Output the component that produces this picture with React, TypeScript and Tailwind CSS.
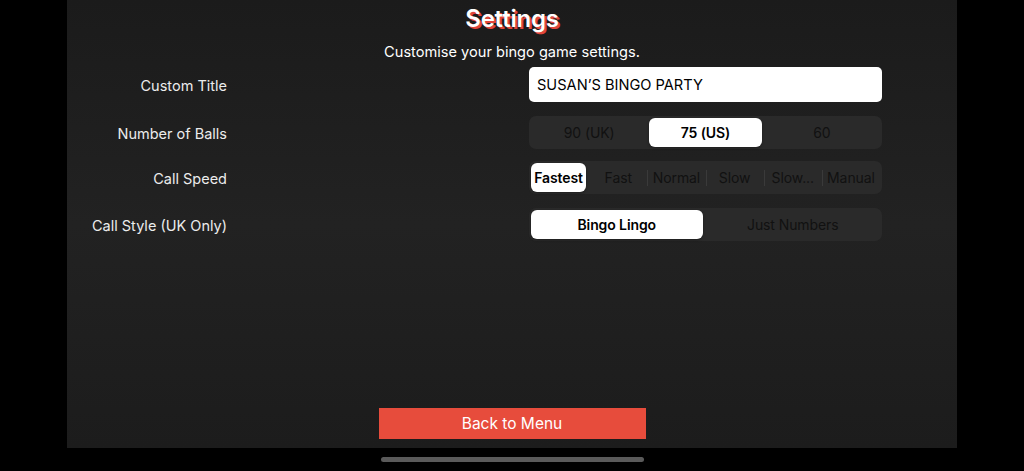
import { useState } from 'react';

const FONT = 'font-["Inter","Liberation_Sans",sans-serif]';

interface SegmentedProps {
  options: string[];
  value: number;
  onChange: (i: number) => void;
}

// iOS-style segmented control with thin dividers between unselected neighbours
function Segmented({ options, value, onChange }: SegmentedProps) {
  return (
    <div className="flex h-[33px] w-[353px] items-stretch rounded-[7px] bg-[#2a2a2a] p-[2px]">
      {options.map((opt, i) => {
        const selected = i === value;
        const first = i === 0;
        const last = i === options.length - 1;
        const showDivider = i > 0 && i !== value && i - 1 !== value;
        return (
          <div key={opt} className="relative flex flex-1 items-stretch">
            {showDivider && (
              <span className="absolute left-0 top-[7px] h-[16px] w-px bg-[#3a3a3a]" />
            )}
            <button
              type="button"
              onClick={() => onChange(i)}
              className={`flex flex-1 items-center justify-center rounded-[6px] text-[14px] tracking-[-0.1px] ${
                selected
                  ? `${first ? 'mr-[3px]' : last ? 'ml-[3px]' : 'mx-[2px]'} bg-white font-semibold text-black shadow-[0_1px_3px_rgba(0,0,0,0.3)]`
                  : 'text-[#111111]'
              }`}
            >
              {opt}
            </button>
          </div>
        );
      })}
    </div>
  );
}

function Row({ label, children }: { label: string; children: React.ReactNode }) {
  return (
    <div className="flex items-center">
      <div className="w-[160px] pt-[2px] text-right text-[14.5px] text-[#ececec]">{label}</div>
      <div className="flex-1" />
      {children}
    </div>
  );
}

export default function App() {
  const [title, setTitle] = useState('SUSAN’S BINGO PARTY');
  const [balls, setBalls] = useState(1);
  const [speed, setSpeed] = useState(0);
  const [style, setStyle] = useState(0);

  return (
    <div className={`flex h-[471px] w-[1024px] flex-col bg-black ${FONT}`}>
      <div className="mx-auto flex h-[448px] w-[890px] flex-col bg-[linear-gradient(to_bottom,#1b1b1b,#222222_50%,#1c1c1c)] pr-[75px]">
        <h1 className="mt-[3px] ml-[75px] text-center text-[24px] font-semibold leading-[32px] tracking-[-0.2px] text-white [text-shadow:2px_2px_0_#e2453a]">
          Settings
        </h1>
        <p className="ml-[75px] mt-[7px] text-center text-[14.6px] leading-[20px] text-white">
          Customise your bingo game settings.
        </p>

        <div className="mt-[5px] flex flex-col">
          <Row label="Custom Title">
            <input
              value={title}
              onChange={(e) => setTitle(e.target.value)}
              className="h-[35px] w-[353px] rounded-[5px] bg-white px-[8px] pt-[1px] text-[14.6px] text-black outline-none"
            />
          </Row>
          <div className="h-[14px]" />
          <Row label="Number of Balls">
            <Segmented options={['90 (UK)', '75 (US)', '60']} value={balls} onChange={setBalls} />
          </Row>
          <div className="h-[12px]" />
          <Row label="Call Speed">
            <Segmented
              options={['Fastest', 'Fast', 'Normal', 'Slow', 'Slow...', 'Manual']}
              value={speed}
              onChange={setSpeed}
            />
          </Row>
          <div className="h-[14px]" />
          <Row label="Call Style (UK Only)">
            <Segmented options={['Bingo Lingo', 'Just Numbers']} value={style} onChange={setStyle} />
          </Row>
        </div>

        <div className="flex-1" />
        <div className="mb-[9px] ml-[75px] flex justify-center">
          <button
            type="button"
            className="h-[31px] w-[267px] bg-[#e74c3c] pt-px text-[15.5px] text-white"
          >
            Back to Menu
          </button>
        </div>
      </div>

      <div className="flex flex-1 items-start justify-center pt-[9px]">
        <div className="h-[5px] w-[263px] rounded-full bg-[#5a5a5a]" />
      </div>
    </div>
  );
}
